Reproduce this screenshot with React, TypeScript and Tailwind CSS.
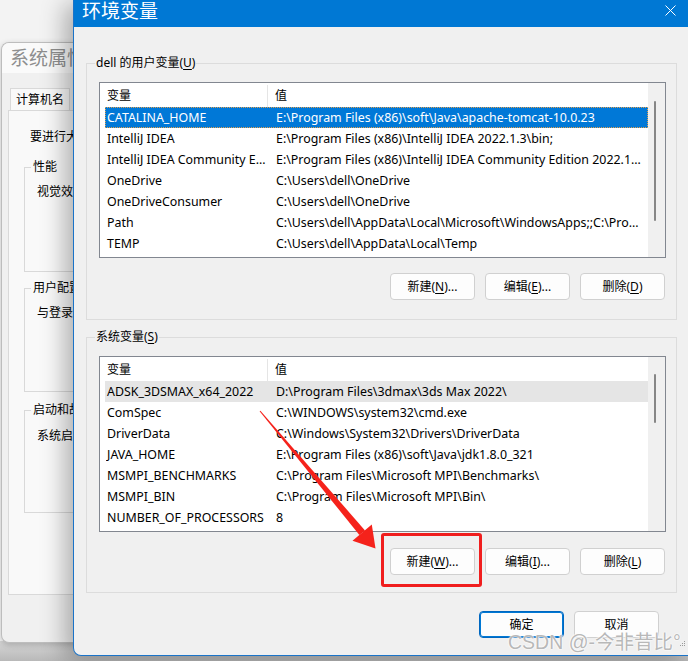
import React from "react";

type Row = { name: string; value: string };

const userVars: Row[] = [
  { name: "CATALINA_HOME", value: "E:\\Program Files (x86)\\soft\\Java\\apache-tomcat-10.0.23" },
  { name: "IntelliJ IDEA", value: "E:\\Program Files (x86)\\IntelliJ IDEA 2022.1.3\\bin;" },
  { name: "IntelliJ IDEA Community E…", value: "E:\\Program Files (x86)\\IntelliJ IDEA Community Edition 2022.1…" },
  { name: "OneDrive", value: "C:\\Users\\dell\\OneDrive" },
  { name: "OneDriveConsumer", value: "C:\\Users\\dell\\OneDrive" },
  { name: "Path", value: "C:\\Users\\dell\\AppData\\Local\\Microsoft\\WindowsApps;;C:\\Pro…" },
  { name: "TEMP", value: "C:\\Users\\dell\\AppData\\Local\\Temp" },
];

const sysVars: Row[] = [
  { name: "ADSK_3DSMAX_x64_2022", value: "D:\\Program Files\\3dmax\\3ds Max 2022\\" },
  { name: "ComSpec", value: "C:\\WINDOWS\\system32\\cmd.exe" },
  { name: "DriverData", value: "C:\\Windows\\System32\\Drivers\\DriverData" },
  { name: "JAVA_HOME", value: "E:\\Program Files (x86)\\soft\\Java\\jdk1.8.0_321" },
  { name: "MSMPI_BENCHMARKS", value: "C:\\Program Files\\Microsoft MPI\\Benchmarks\\" },
  { name: "MSMPI_BIN", value: "C:\\Program Files\\Microsoft MPI\\Bin\\" },
  { name: "NUMBER_OF_PROCESSORS", value: "8" },
];

function ListView({
  rows,
  selected,
  focused,
  thumbTop,
  thumbHeight,
}: {
  rows: Row[];
  selected: number;
  focused: boolean;
  thumbTop: number;
  thumbHeight: number;
}) {
  return (
    <div className="flex h-[176px] w-[567px] border border-[#828790] bg-white">
      <div className="flex flex-1 flex-col overflow-hidden">
        <div className="flex h-[24px] shrink-0 items-center pt-[2px] text-[12px] text-black">
          <div className="flex h-full w-[168px] items-center border-r border-[#e5e5e5] pl-[7px]">变量</div>
          <div className="pl-[7px]">值</div>
        </div>
        {rows.map((r, i) => {
          const sel = i === selected;
          const cls = sel
            ? focused
              ? "bg-[#0078d7] text-white border border-dotted border-[#e0a050]"
              : "bg-[#e5e5e5] text-black border border-transparent"
            : "text-black border border-transparent";
          return (
            <div key={i} className={`ml-[5px] flex h-[21px] shrink-0 items-center pt-[2px] text-[12.4px] ${cls}`}>
              <div className="w-[162px] shrink-0 overflow-hidden whitespace-nowrap pl-[1px]">{r.name}</div>
              <div className="min-w-0 flex-1 overflow-hidden whitespace-nowrap pl-[8px]">{r.value}</div>
            </div>
          );
        })}
      </div>
      <div className="relative w-[17px] shrink-0 bg-[#f0f0f0]">
        <div
          className="absolute left-[6px] w-[2px] rounded-full bg-[#868686]"
          style={{ top: thumbTop, height: thumbHeight }}
        />
      </div>
    </div>
  );
}

function Btn({ children, primary }: { children: React.ReactNode; primary?: boolean }) {
  return (
    <div
      className={`flex h-[27px] w-[85px] items-center justify-center rounded-[4px] border text-[12px] text-black ${
        primary ? "border-[#0067c0] bg-[#fdfdfd] shadow-[inset_0_0_0_1px_#0078d4]" : "border-[#d0d0d0] bg-[#fdfdfd]"
      }`}
    >
      {children}
    </div>
  );
}

function M({ c }: { c: string }) {
  return <span className="underline underline-offset-[2px]">{c}</span>;
}

export default function App() {
  return (
    <div className="relative h-[661px] w-[688px] overflow-hidden bg-[#f3f3f3] font-['Noto_Sans','Noto_Sans_CJK_SC',sans-serif]">
      {/* desktop bottom shade */}
      <div className="absolute bottom-0 left-0 h-[20px] w-full bg-[linear-gradient(to_bottom,#d6d6d6,#b9b9b9)]" />

      {/* background window: 系统属性 (only its left part shows) */}
      <div className="absolute left-[1px] top-[42px] flex h-[601px] w-[80px] flex-col overflow-hidden rounded-l-[8px] border border-r-0 border-[#bdbdbd] bg-[#f0f0f0] shadow-[0_2px_6px_rgba(0,0,0,0.2)]">
        <div className="flex h-[30px] shrink-0 items-center overflow-hidden whitespace-nowrap bg-[#fafafa] pl-[8px] text-[19px] text-[#8e8e8e]">系统属性</div>
        <div className="mt-[15px] ml-[8px] flex h-[22px] w-[60px] shrink-0 items-center justify-center border border-b-0 border-[#d9d9d9] bg-[#f9f9f9] text-[12px] text-black">
          计算机名
        </div>
        <div className="ml-[6px] flex h-[485px] w-[300px] shrink-0 flex-col border border-[#d9d9d9] bg-[#f9f9f9] pl-[15px] text-[12px] text-black">
          <div className="mt-[18px] w-[50px] overflow-hidden whitespace-nowrap pl-[6px] leading-[16px]">要进行大多数更改</div>
          <fieldset className="mt-[14px] h-[113px] w-[260px] border border-[#d9d9d9]">
            <legend className="ml-[6px] w-[44px] overflow-hidden whitespace-nowrap px-[2px] leading-[16px]">性能</legend>
            <div className="mt-[9px] w-[48px] overflow-hidden whitespace-nowrap pl-[12px] leading-[16px]">视觉效果</div>
          </fieldset>
          <fieldset className="mt-[8px] h-[112px] w-[260px] border border-[#d9d9d9]">
            <legend className="ml-[6px] w-[44px] overflow-hidden whitespace-nowrap px-[2px] leading-[16px]">用户配置</legend>
            <div className="mt-[9px] w-[48px] overflow-hidden whitespace-nowrap pl-[12px] leading-[16px]">与登录帐户</div>
          </fieldset>
          <fieldset className="mt-[10px] h-[111px] w-[260px] border border-[#d9d9d9]">
            <legend className="ml-[6px] w-[44px] overflow-hidden whitespace-nowrap px-[2px] leading-[16px]">启动和故障</legend>
            <div className="mt-[10px] w-[48px] overflow-hidden whitespace-nowrap pl-[12px] leading-[16px]">系统启动</div>
          </fieldset>
        </div>
      </div>

      {/* main dialog: 环境变量 */}
      <div className="absolute left-[73px] top-0 flex h-[656px] w-[617px] flex-col overflow-hidden rounded-bl-[8px] border border-t-0 border-[#1a73c8] bg-[#f0f0f0] shadow-[-8px_4px_24px_rgba(0,0,0,0.3)]">
        <div className="relative flex h-[27px] shrink-0 items-start bg-[#0078d4] pl-[8px]">
          <span className="text-[19px] leading-[22px] text-white">环境变量</span>
          <svg className="absolute left-[591px] top-[5px]" width="11" height="11" viewBox="0 0 11 11">
            <path d="M0.5 0.5 L10.5 10.5 M10.5 0.5 L0.5 10.5" stroke="white" strokeWidth="1" />
          </svg>
        </div>

        <div className="flex flex-col px-[12px] text-[12px] text-black">
          <fieldset className="mt-[28px] h-[265px] border border-[#dcdcdc]">
            <legend className="ml-[8px] px-[1px] leading-[16px]">
              dell 的用户变量(<M c="U" />)
            </legend>
            <div className="ml-[12px] mt-[11px]">
              <ListView rows={userVars} selected={0} focused thumbTop={18} thumbHeight={120} />
            </div>
            <div className="ml-[12px] mt-[15px] flex w-[566px] justify-end gap-[10px]">
              <Btn>
                新建(<M c="N" />)...
              </Btn>
              <Btn>
                编辑(<M c="E" />)...
              </Btn>
              <Btn>
                删除(<M c="D" />)
              </Btn>
            </div>
          </fieldset>

          <fieldset className="mt-[9px] h-[264px] border border-[#dcdcdc]">
            <legend className="ml-[8px] px-[1px] leading-[16px]">
              系统变量(<M c="S" />)
            </legend>
            <div className="ml-[12px] mt-[11px]">
              <ListView rows={sysVars} selected={0} focused={false} thumbTop={17} thumbHeight={49} />
            </div>
            <div className="ml-[12px] mt-[16px] flex w-[566px] justify-end gap-[10px]">
              <Btn>
                新建(<M c="W" />)...
              </Btn>
              <Btn>
                编辑(<M c="I" />)...
              </Btn>
              <Btn>
                删除(<M c="L" />)
              </Btn>
            </div>
          </fieldset>

          <div className="mt-[18px] flex justify-end gap-[10px] pr-[18px]">
            <Btn primary>确定</Btn>
            <Btn>取消</Btn>
          </div>
        </div>
      </div>

      {/* resize grip */}
      <div className="absolute left-[680px] top-[641px] grid grid-cols-3 gap-[1px]">
        {[0, 1, 2, 3, 4, 5, 6, 7, 8].map((i) => (
          <div key={i} className={`h-[1px] w-[1px] ${i === 2 || i === 4 || i === 5 || i >= 6 ? "bg-[#9a9a9a]" : ""}`} />
        ))}
      </div>

      {/* red annotation box */}
      <div className="absolute left-[381px] top-[533px] h-[54px] w-[101px] rounded-[3px] border-[3px] border-[#f01e1e]" />

      {/* red arrow */}
      <svg className="pointer-events-none absolute left-0 top-0" width="688" height="661" viewBox="0 0 688 661">
        <polygon points="259.6,411.3 260.4,410.7 365,530.4 359.4,535" fill="#f5221b" />
        <polygon points="375.5,548.5 352.5,540.8 371.8,524.6" fill="#f5221b" />
      </svg>

      {/* watermark */}
      <div className="absolute left-[508px] top-[630px] whitespace-nowrap font-['Liberation_Sans','Noto_Sans_CJK_SC',sans-serif] text-[19.5px] leading-[24px] text-[rgba(165,165,165,0.8)] [text-shadow:0_0_2px_#ffffff,0_0_2px_#ffffff,0_0_1px_#ffffff]">
        CSDN @-今非昔比°
      </div>
    </div>
  );
}
